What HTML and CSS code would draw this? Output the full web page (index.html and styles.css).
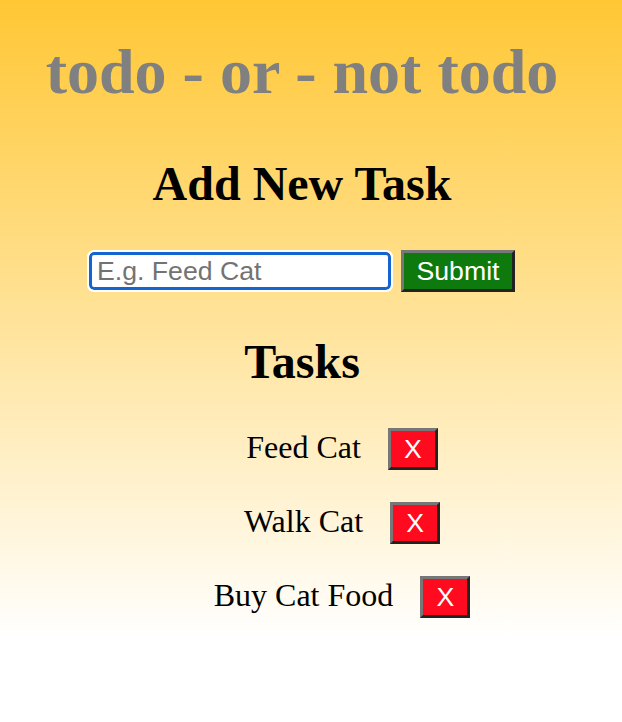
FILE: index.html
```html
<!DOCTYPE html>
<html>
<head>
<meta charset="utf-8">
<link rel="stylesheet" href="styles.css">
</head>
<body>
<div class="app">
  <h1 class="title">todo - or - not todo</h1>
  <h2 class="heading">Add New Task</h2>
  <form class="add-form">
    <input class="task-input" type="text" placeholder="E.g. Feed Cat">
    <button class="submit-btn" type="button">Submit</button>
  </form>
  <h2 class="heading tasks-heading">Tasks</h2>
  <ul class="task-list">
    <li class="task"><span class="task-name">Feed Cat</span><button class="delete-btn" type="button">X</button></li>
    <li class="task"><span class="task-name">Walk Cat</span><button class="delete-btn" type="button">X</button></li>
    <li class="task"><span class="task-name">Buy Cat Food</span><button class="delete-btn" type="button">X</button></li>
  </ul>
</div>
</body>
</html>
```
FILE: styles.css
```css
html, body {
  margin: 0;
  padding: 0;
  background: #fff;
}
.app {
  background: linear-gradient(#ffc734, #ffffff);
  font-family: "Liberation Serif", "Times New Roman", serif;
  text-align: center;
  padding: 1px 18px 0 0;
  height: 640px;
  box-sizing: border-box;
}
.title {
  font-size: 64px;
  color: #808080;
  margin: 34px 0 0;
  line-height: 74px;
}
.heading {
  font-size: 48px;
  margin: 47px 0 0;
  line-height: 55px;
}
.add-form {
  display: flex;
  justify-content: center;
  align-items: center;
  gap: 10px;
  margin-top: 39px;
  height: 42px;
}
.task-input {
  width: 302px;
  height: 38px;
  box-sizing: border-box;
  font-family: "Liberation Sans", Arial, sans-serif;
  font-size: 26.67px;
  padding: 0 5px;
  border: 3px solid #1565d0;
  border-radius: 5px;
  outline: 2px solid #fff;
  background: #fff;
  margin: 0;
}
.task-input::placeholder {
  color: #737373;
}
.submit-btn {
  background: #0e7a0e;
  color: #fff;
  font-family: "Liberation Sans", Arial, sans-serif;
  font-size: 26.67px;
  border: 3px solid;
  border-color: #777 #222 #222 #777;
  padding: 0;
  width: 114px;
  height: 42px;
  margin: 0;
}
.tasks-heading {
  margin-top: 42px;
}
.task-list {
  list-style: none;
  margin: 39px 0 0;
  padding: 0 0 0 80px;
}
.task {
  display: flex;
  justify-content: center;
  align-items: baseline;
  gap: 27px;
  margin-bottom: 32px;
  font-size: 32px;
}
.delete-btn {
  width: 50px;
  height: 42px;
  background: #ff0a1e;
  color: #fff;
  font-family: "Liberation Sans", Arial, sans-serif;
  font-size: 26.67px;
  border: 3px solid;
  border-color: #777 #222 #222 #777;
  padding: 0;
  margin: 0;
}
```
